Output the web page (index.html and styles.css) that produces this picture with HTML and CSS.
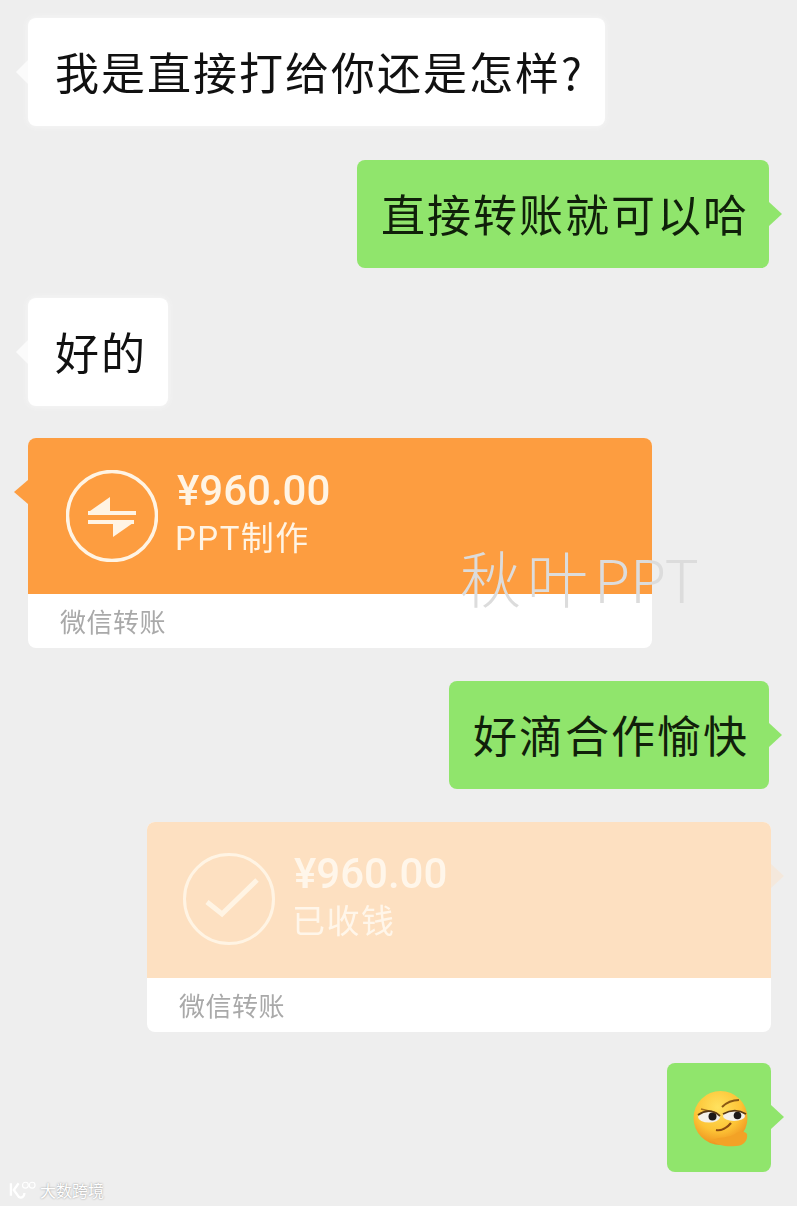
FILE: index.html
```html
<!DOCTYPE html>
<html lang="zh-CN">
<head>
  <meta charset="UTF-8">
  <meta name="viewport" content="width=device-width, initial-scale=1.0">
  <title>微信聊天记录</title>
  <link rel="stylesheet" href="styles.css">
</head>
<body>
<div class="chat">
  <div class="row gap-34">
    <div class="bubble white tail-left">我是直接打给你还是怎样?</div>
  </div>

  <div class="row right gap-30">
    <div class="bubble green tail-right">直接转账就可以哈</div>
  </div>

  <div class="row gap-32">
    <div class="bubble white tail-left">好的</div>
  </div>

  <div class="row gap-33">
    <div class="card">
      <div class="card-top orange tail-left">
        <svg class="card-icon" viewBox="0 0 92 92">
          <circle cx="46" cy="46" r="44.5" fill="none" stroke="#fff4e4" stroke-width="3.5"/>
          <path d="M22 41H70V45H22Z" fill="#fff4e4"/>
          <path d="M24 41L44 27V41Z" fill="#fff4e4"/>
          <path d="M22 50H68V54H22Z" fill="#fff4e4"/>
          <path d="M47 53H67L47 67Z" fill="#fff4e4"/>
        </svg>
        <div class="card-text">
          <div class="amount">¥960.00</div>
          <div class="note">PPT制作</div>
        </div>
      </div>
      <div class="card-foot">微信转账</div>
    </div>
  </div>

  <div class="row right gap-33">
    <div class="bubble green tail-right">好滴合作愉快</div>
  </div>

  <div class="row right edge gap-31">
    <div class="card">
      <div class="card-top pale tail-right">
        <svg class="card-icon" viewBox="0 0 92 92">
          <circle cx="46" cy="46" r="44.5" fill="none" stroke="#fff4e4" stroke-width="3"/>
          <path d="M24 49L39 61L74 27" fill="none" stroke="#fff4e4" stroke-width="5"/>
        </svg>
        <div class="card-text">
          <div class="amount">¥960.00</div>
          <div class="note">已收钱</div>
        </div>
      </div>
      <div class="card-foot">微信转账</div>
    </div>
  </div>

  <div class="row right edge">
    <div class="bubble green tail-right emoji-bubble">
      <svg class="emoji" viewBox="0 0 60 60">
        <defs>
          <radialGradient id="face" cx="45%" cy="30%" r="72%">
            <stop offset="0" stop-color="#ffe25f"/>
            <stop offset="0.6" stop-color="#fdc436"/>
            <stop offset="1" stop-color="#ee8f1e"/>
          </radialGradient>
        </defs>
        <circle cx="31.5" cy="30" r="27" fill="url(#face)"/>
        <path d="M12 21L28 25" fill="none" stroke="#a8701c" stroke-width="1.6"/>
        <path d="M33 19C38 14 43 12 50 12" fill="none" stroke="#8a5a14" stroke-width="2"/>
        <ellipse cx="20" cy="29" rx="11" ry="5.5" fill="#f4f1ea"/>
        <ellipse cx="45" cy="28" rx="11" ry="5" fill="#f4f1ea"/>
        <circle cx="23.5" cy="28.5" r="4" fill="#1e1a18"/>
        <circle cx="48.5" cy="27.5" r="3.8" fill="#1e1a18"/>
        <path d="M9 27C16 22 24 22 31 28" fill="none" stroke="#5a3a14" stroke-width="1.8"/>
        <path d="M34 26C41 22 49 21 57 26" fill="none" stroke="#5a3a14" stroke-width="1.8"/>
        <path d="M27 42C32 43 38 40 42 35" fill="none" stroke="#8a4a10" stroke-width="2.2"/>
        <path d="M23 52C30 49 40 50 46 46C50 43 56 43 58 46C59 52 55 58 47 58C38 59 29 58 23 52Z" fill="#f3a226"/>
      </svg>
    </div>
  </div>
</div>

<div class="mark">秋叶<span class="mark-latin">PPT</span></div>

<div class="logo">
  <svg class="logo-icon" viewBox="0 0 30 20">
    <path d="M3 3V16M11 3L6 10L11 17C14 19 17 17 17 13" fill="none" stroke="#fff" stroke-width="2.4"/>
    <circle cx="18" cy="5" r="3" fill="none" stroke="#fff" stroke-width="1.2"/>
    <circle cx="25" cy="5" r="3" fill="none" stroke="#fff" stroke-width="1.2"/>
  </svg>
  <span>大数跨境</span>
</div>
</body>
</html>
```

FILE: styles.css
```css
body {
  margin: 0;
  background-color: #eeeeee;
  font-family: "Noto Sans CJK SC", "Liberation Sans", sans-serif;
  color: #111;
  position: relative;
  height: 1206px;
  overflow: hidden;
}

.chat {
  display: flex;
  flex-direction: column;
  padding-top: 18px;
  filter: blur(0.6px);
}

.row {
  display: flex;
  padding: 0 28px;
}

.right {
  justify-content: flex-end;
}

.edge {
  padding-right: 26px;
}

.gap-30 { margin-bottom: 30px; }
.gap-31 { margin-bottom: 31px; }
.gap-32 { margin-bottom: 32px; }
.gap-33 { margin-bottom: 33px; }
.gap-34 { margin-bottom: 34px; }

.bubble {
  position: relative;
  height: 108px;
  padding: 0 21px 0 27px;
  border-radius: 8px;
  font-size: 44px;
  letter-spacing: 2px;
  line-height: 106px;
  white-space: nowrap;
}

.white {
  background-color: #fff;
  box-shadow: 0 0 6px #f8f8f8;
}

.green {
  padding: 0 20px 0 24px;
  background-color: #90e56c;
  color: #10200a;
}

.orange { background-color: #fd9d40; }
.pale { background-color: #fde0c1; }

.tail-left::before,
.tail-right::after {
  content: "";
  position: absolute;
  top: 42px;
  border-style: solid;
  border-width: 12px 0;
  border-color: transparent;
}

.tail-left::before {
  left: -12px;
  border-right: 12px solid #fbfbfb;
}

.tail-right::after {
  right: -13px;
  border-left: 13px solid #90e56c;
}

.orange.tail-left::before {
  left: -14px;
  border-right: 14px solid #fd9d40;
}

.pale.tail-right::after {
  border-left-color: #f4e8dc;
}

.card {
  width: 624px;
  height: 210px;
  border-radius: 8px;
  background-color: #fff;
}

.card-top {
  position: relative;
  display: flex;
  height: 156px;
  padding: 32px 0 0 38px;
  box-sizing: border-box;
  border-radius: 8px 8px 0 0;
}

.pale {
  padding: 31px 0 0 36px;
}

.card-icon {
  width: 92px;
  height: 92px;
}

.card-text {
  margin-left: 19px;
  margin-top: -8px;
  color: #fff4e4;
}

.amount {
  font-family: Roboto, sans-serif;
  font-size: 42px;
  font-weight: 500;
  line-height: 58px;
}

.note {
  margin-top: -4px;
  margin-left: -2px;
  font-family: Roboto, "Noto Sans CJK SC", sans-serif;
  font-size: 33px;
  letter-spacing: 1.5px;
  line-height: 46px;
}

.pale .card-text {
  color: #fff6ea;
}

.card-foot {
  padding-left: 32px;
  font-size: 26px;
  letter-spacing: 0.5px;
  line-height: 54px;
  color: #a9a9a9;
}

.emoji-bubble {
  display: flex;
  align-items: center;
  justify-content: center;
  width: 104px;
  height: 109px;
  padding: 0;
}

.emoji {
  width: 60px;
  height: 60px;
  overflow: visible;
}

.mark {
  position: absolute;
  left: 460px;
  top: 533px;
  font-size: 61px;
  font-weight: 300;
  letter-spacing: 6px;
  line-height: 88px;
  color: #dcdcdc;
  white-space: nowrap;
}

.mark-latin {
  font-size: 59px;
  letter-spacing: 0;
}

.logo {
  position: absolute;
  left: 8px;
  top: 1180px;
  display: flex;
  align-items: center;
  gap: 3px;
  font-size: 16px;
  line-height: 20px;
  color: #fff;
  text-shadow: 0 0 2px #8c8c8c;
}

.logo-icon {
  width: 29px;
  height: 20px;
}
```
